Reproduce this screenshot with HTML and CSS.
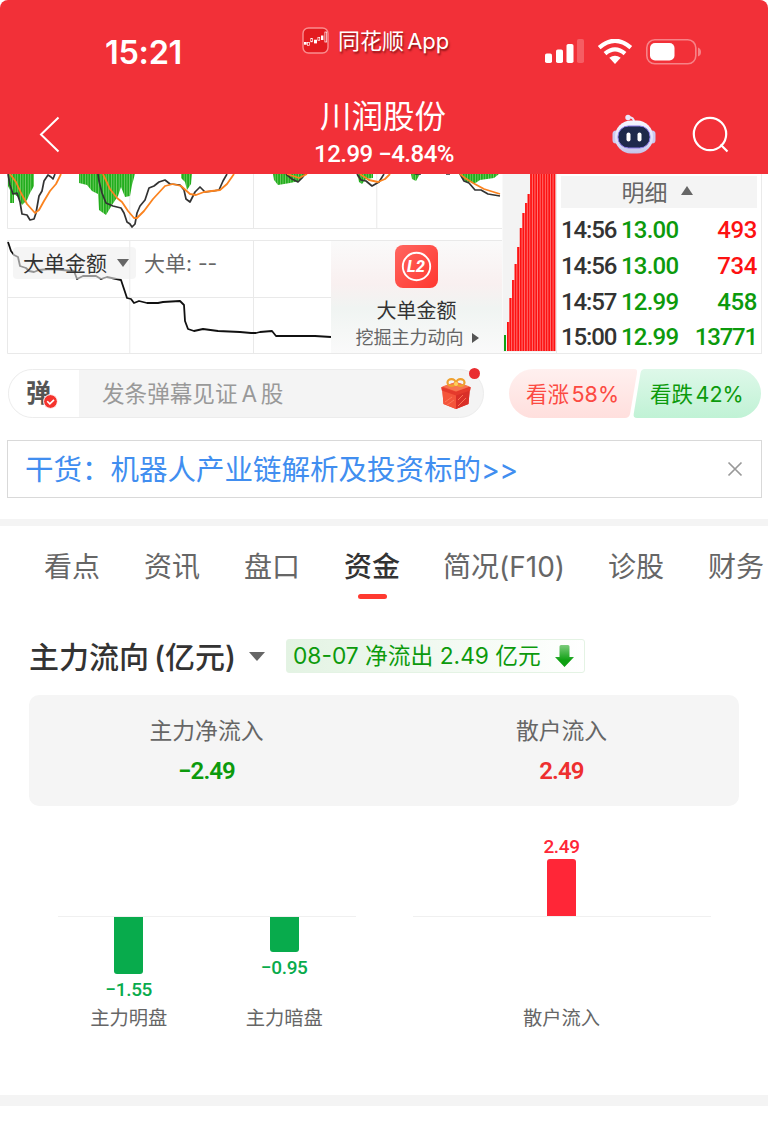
FILE: index.html
```html
<!DOCTYPE html>
<html lang="zh-CN">
<head>
<meta charset="utf-8">
<title>川润股份</title>
<link rel="stylesheet" href="styles.css">
</head>
<body>
<header class="header">
  <div class="status">
    <div class="clock">15:21</div>
    <div class="brand">
      <svg width="27" height="27" viewBox="0 0 27 27"><rect x="1" y="1" width="25" height="25" rx="5.500" fill="#e31b20" stroke="#fa8d8f" stroke-width="1.400"/><g fill="#fff"><rect x="2" y="15" width="2.700" height="2.700"/><rect x="12" y="12.700" width="3" height="3.700"/><rect x="19" y="8.500" width="2.400" height="4.500"/></g><g fill="none" stroke="#fff" stroke-width=".7"><rect x="5.600" y="15.500" width="1.800" height="2.800"/><rect x="8.800" y="11.500" width="1.800" height="3.300"/><rect x="15.900" y="10.500" width="1.800" height="2.800"/><rect x="22.900" y="5" width="1.800" height="10"/></g></svg>
      <span class="brand-name">同花顺 App</span>
    </div>
    <div class="signals">
      <svg width="39" height="25" viewBox="0 0 39 25" fill="#fff"><rect x="0" y="14.500" width="7" height="9.500" rx="1.800"/><rect x="11" y="10.500" width="7" height="13.500" rx="1.800"/><rect x="21.500" y="5" width="7" height="19" rx="1.800"/><rect x="32" y="0" width="7" height="24" rx="1.800" opacity=".22"/></svg>
      <svg width="36" height="26" viewBox="0 0 36 26" fill="none" stroke="#fff" stroke-width="4.200"><path d="M2.200 8.600Q18-5 33.800 8.600"/><path d="M8 14.700Q18 6 28 14.700"/><path d="M12.300 18.800Q18 14.500 23.700 18.800L18 25Z" fill="#fff" stroke="none"/></svg>
      <svg width="56" height="26" viewBox="0 0 56 26"><rect x=".800" y=".800" width="49" height="24" rx="8" fill="none" stroke="#fff" stroke-opacity=".4" stroke-width="1.600"/><rect x="4" y="4" width="24.500" height="17.500" rx="5" fill="#fff"/><path d="M52 8.500q3 1 3 4.500t-3 4.500z" fill="#fff" opacity=".4"/></svg>
    </div>
  </div>
  <nav class="nav">
    <svg class="back" width="21" height="37" viewBox="0 0 21 37" fill="none" stroke="#fff" stroke-width="2"><path d="M19.500 1.500L2 18.500L19.500 35.500"/></svg>
    <div class="stock">
      <h1 class="stock-name">川润股份</h1>
      <div class="stock-quote">12.99 −4.84%</div>
    </div>
    <div class="actions">
      <svg width="44" height="41" viewBox="0 0 44 41"><defs><linearGradient id="shell" x1="0" y1="0" x2="0" y2="1"><stop offset="0" stop-color="#f6f6ff"/><stop offset=".7" stop-color="#dcdcf5"/><stop offset="1" stop-color="#c3c2e8"/></linearGradient></defs><path d="M22 8c0-4-2-5-6-5" fill="none" stroke="#e9e8fb" stroke-width="2"/><circle cx="16" cy="3.500" r="2.700" fill="#e9e8fb"/><rect x=".5" y="16.500" width="7" height="13" rx="3.500" fill="#cbcaef"/><rect x="36.500" y="16.500" width="7" height="13" rx="3.500" fill="#cbcaef"/><rect x="3" y="6.500" width="38" height="33" rx="16" fill="url(#shell)"/><rect x="6" y="12" width="32" height="22" rx="10.500" fill="#1e294b" stroke="#8b7be8" stroke-width="1"/><rect x="14.500" y="18.500" width="4" height="9" rx="2" fill="#fff"/><rect x="25.500" y="18.500" width="4" height="9" rx="2" fill="#fff"/></svg>
      <svg width="37" height="37" viewBox="0 0 37 37" fill="none" stroke="#fff" stroke-width="2.200"><circle cx="18" cy="18" r="16.200"/><path d="M28.500 28.500L35.500 35.500"/></svg>
    </div>
  </nav>
</header>

<section class="market">
  <div class="charts">
    <svg width="502" height="180" viewBox="0 174 502 180">
      <defs>
        <pattern id="hist" width="2.600" height="10" patternUnits="userSpaceOnUse"><rect width="2.600" height="10" fill="#7bd06c"/><rect width="1.800" height="10" fill="#22ad1e"/></pattern>
      </defs>
      <g fill="none" stroke="#e9e9e9"><path d="M7.500 174V228.500H502M129.800 174V228M253.500 174V228M376.800 174V228M7.500 240.500H502M7.500 240V353.500H502M7.500 297.500H331M129.800 241V353M253.500 241V353"/></g>
      <g fill="url(#hist)">
        <path d="M8 174V186L10 190V203H14V194L18 197L22 205L27 200L30 193L34 186V174Z"/>
        <path d="M79 174V183L87 185L92 191L98 194L99 210L106 215L112 205L118 196L121 187L125 197L130 196L132 185L135 174Z"/>
        <path d="M181 174V178L185 182L187 190L191 184L192 174Z"/>
        <path d="M273 174L274 180L278 185L290 183L299 181L305 174Z"/>
        <path d="M357 174L359 182L362 184L366 179L373 178V174ZM411 174L412 179L416 181L420 174ZM459 174L466 182L472 182L474 184L480 180L494 178L499 174Z"/>
      </g>
      <g fill="none" stroke="#333" stroke-width="1.700" stroke-linejoin="round">
        <path d="M8 174L10 185L13 194L17 193L20 202L22 214L27 215L30 220L34 219L36 213L39 196L42 191L44 181L48 175L51 177L53 179L55 174"/>
        <path d="M98 174L99 181L102 193L106 203L113 206L121 208L124 213L127 222L130 224L132 227L135 224L137 213L140 206L145 200L149 188L154 186L159 182L165 180L170 184L180 185L184 190L186 199L190 202L195 192L200 187L205 192L213 191L219 190L223 181L227 174"/>
        <path d="M286 174L292 179L298 182L302 178L305 174M357 174L361 180L366 181L372 186L379 182L384 174M415 174H421M446 174H450M460 174L464 181L469 183L475 190L481 190L488 194L500 196"/>
      </g>
      <g fill="none" stroke="#fb831f" stroke-width="1.800" stroke-linejoin="round">
        <path d="M10 174L16 182L21 193L27 204L35 213L39 210L44 201L50 191L56 184L61 174"/>
        <path d="M103 174L110 189L117 198L122 202L128 211L134 218L137 218L144 211L153 199L165 186L173 184L181 186L190 194L196 195L204 192L220 190L227 184L234 174"/>
        <path d="M287 174L299 178L307 174M360 174L369 180L378 182L385 179L390 174M460 174L465 178L473 183L484 189L500 194"/>
      </g>
      <path d="M8 242L11 251L14 255L18 257L20 266L26 268L29 271L34 272L39 270L50 269L62 270L74 271L77 279L83 276L96 276L101 279L107 277L121 280L124 289L127 298L131 299L134 303L139 301L147 303L158 303L163 302L180 301L184 305L185 321L188 329L194 331L203 329L218 331L240 332L251 333L256 333L260 332L272 331L276 336L286 336L296 336L315 336L331 337" fill="none" stroke="#111" stroke-width="1.800" stroke-linejoin="round"/>
    </svg>
    <div class="legend">
      <span class="chip">大单金额 <i class="tri-down"></i></span>
      <span class="legend-value">大单: --</span>
    </div>
    <div class="promo">
      <svg width="43" height="43" viewBox="0 0 43 43"><defs><linearGradient id="l2" x1="0" y1="0" x2="1" y2="1"><stop offset="0" stop-color="#ff6660"/><stop offset="1" stop-color="#ff372f"/></linearGradient></defs><rect width="43" height="43" rx="8" fill="url(#l2)"/><circle cx="21.500" cy="21.500" r="13.700" fill="none" stroke="#fff" stroke-width="1.900"/><text class="l2-text" x="21" y="27.300" text-anchor="middle">L2</text></svg>
      <div class="promo-title">大单金额</div>
      <div class="promo-sub">挖掘主力动向 <i class="tri-right"></i></div>
    </div>
  </div>
  <svg class="volume" width="54" height="180" viewBox="502 174 54 180">
    <rect x="502.500" y="174" width="53" height="178" fill="#f3f3f3"/>
    <path d="M502 353.500H556" stroke="#e9e9e9"/>
    <path d="M504 335h2V351h-2z" fill="#12a112"/>
    <path d="M507 322H509.500V298H512V280H514.500V264H517V247H519.700V228H522.300V213H525V203H527.500V194H530V174H555.500V351H507Z" fill="#ff7c7c"/>
    <path d="M507 322h1.700V351h-1.700zM509.500 298h1.700V351h-1.700zM512.100 280h1.700V351h-1.700zM514.700 264h1.700V351h-1.700zM517.300 247h1.700V351h-1.700zM519.900 228h1.700V351h-1.700zM522.500 213h1.700V351h-1.700zM525.100 203h1.700V351h-1.700zM527.700 194h1.700V351h-1.700zM530.200 174h1.700V351h-1.700zM532.800 174h1.700V351h-1.700zM535.400 174h1.700V351h-1.700zM538 174h1.700V351h-1.700zM540.600 174h1.700V351h-1.700zM543.200 174h1.700V351h-1.700zM545.700 174h1.700V351h-1.700zM548.300 174h1.700V351h-1.700zM550.900 174h1.700V351h-1.700zM553.500 174h1.700V351h-1.700z" fill="#fd1111"/>
  </svg>
  <div class="ticks">
    <div class="ticks-head">明细 <i class="tri-up"></i></div>
    <div class="tick"><span class="tick-time">14:56</span><span class="tick-price">13.00</span><span class="tick-vol up">493</span></div>
    <div class="tick"><span class="tick-time">14:56</span><span class="tick-price">13.00</span><span class="tick-vol up">734</span></div>
    <div class="tick"><span class="tick-time">14:57</span><span class="tick-price">12.99</span><span class="tick-vol">458</span></div>
    <div class="tick"><span class="tick-time">15:00</span><span class="tick-price">12.99</span><span class="tick-vol tick-vol-long">13771</span></div>
  </div>
</section>

<section class="social">
  <div class="comment">
    <div class="comment-toggle"><span class="dan">弹</span><svg class="check" width="15" height="15" viewBox="0 0 15 15"><circle cx="7.500" cy="7.500" r="6.900" fill="#f5332c" stroke="#fff"/><path d="M4.200 7.200l2.600 2.600 4.200-4" fill="none" stroke="#fff" stroke-width="1.600"/></svg></div>
    <div class="comment-input">发条弹幕见证 A 股</div>
    <svg class="gift" width="30" height="32" viewBox="0 0 30 32"><path d="M1 9L15 4L29 9L27.500 26L15 31L2.500 26Z" fill="#ed4532"/><path d="M1 9L15 14.500V31L2.500 26Z" fill="#f4553b"/><path d="M15 14.500L29 9L27.500 26L15 31Z" fill="#d92f28"/><path d="M1 8.500L15 4L29 8.500L15 13.500Z" fill="#f77450"/><path d="M0 9L15 14V17.500L.8 12.500ZM30 9L15 14V17.500L29.200 12.500Z" fill="#e53a2c"/><path d="M4 24l7-5M6 27l7-5M17 28l8-8M17 22l5-5" stroke="#ff7a5a" stroke-width=".9"/><g fill="none" stroke="#efa12f" stroke-width="2.200"><ellipse cx="10.500" cy="4.500" rx="4" ry="3.300"/><ellipse cx="19.500" cy="4.500" rx="4" ry="3.300"/></g><circle cx="15" cy="6" r="2" fill="#ffd05b"/></svg>
    <i class="dot"></i>
  </div>
  <div class="votes">
    <div class="vote vote-up"><svg class="vote-shape" width="128" height="49" viewBox="0 0 128 49"><defs><linearGradient id="vu" x1="0" y1="0" x2="0" y2="1"><stop offset="0" stop-color="#fff0ef"/><stop offset="1" stop-color="#ffdfdd"/></linearGradient></defs><path d="M24.500 0H125Q129 0 128 4L121 45Q120 49 116 49H24.500A24.500 24.500 0 0 1 24.500 0Z" fill="url(#vu)"/></svg><span class="vote-text">看涨 58%</span></div>
    <div class="vote vote-down"><svg class="vote-shape" width="128" height="49" viewBox="0 0 128 49"><defs><linearGradient id="vd" x1="0" y1="0" x2="0" y2="1"><stop offset="0" stop-color="#def8e9"/><stop offset="1" stop-color="#c0f2d5"/></linearGradient></defs><path d="M12 0H103.500A24.500 24.500 0 0 1 103.500 49H4Q0 49 .7 45L7.500 4Q8.200 0 12 0Z" fill="url(#vd)"/></svg><span class="vote-text">看跌 42%</span></div>
  </div>
</section>

<section class="banner">
  <span class="banner-text">干货：机器人产业链解析及投资标的<span class="banner-more">&gt;&gt;</span></span>
  <svg width="16" height="16" viewBox="0 0 16 16" stroke="#999" stroke-width="1.700"><path d="M1.500 1.500L14.500 14.500M14.500 1.500L1.500 14.500"/></svg>
</section>

<nav class="tabs">
  <span class="tab">看点</span><span class="tab">资讯</span><span class="tab">盘口</span><span class="tab tab-active">资金</span><span class="tab tab-wide">简况(F10)</span><span class="tab">诊股</span><span class="tab">财务</span>
</nav>

<main class="flow">
  <div class="flow-head">
    <h2 class="flow-title">主力流向 (亿元)</h2>
    <i class="tri-down"></i>
    <div class="flow-badge"><span class="badge-text">08-07 净流出 2.49 亿元</span><svg width="19" height="22" viewBox="0 0 19 22"><defs><linearGradient id="ar" x1="0" y1="0" x2="0" y2="1"><stop offset="0" stop-color="#7dcc7d"/><stop offset=".7" stop-color="#0ea012"/></linearGradient></defs><path d="M4.500 1.500Q4.500 0 6 0H13Q14.500 0 14.500 1.500V12H19L9.500 22L0 12H4.500Z" fill="url(#ar)"/></svg></div>
  </div>
  <div class="summary">
    <div class="cell"><div class="cell-label">主力净流入</div><div class="cell-value down">−2.49</div></div>
    <div class="cell"><div class="cell-label">散户流入</div><div class="cell-value rise">2.49</div></div>
  </div>
  <div class="plots">
    <div class="plot">
      <div class="axis"></div>
      <div class="neg"><i class="bar" style="height:57px"></i><b class="bar-value">−1.55</b></div>
      <div class="neg"><i class="bar" style="height:35px"></i><b class="bar-value">−0.95</b></div>
      <div class="bar-label">主力明盘</div>
      <div class="bar-label">主力暗盘</div>
    </div>
    <div class="plot plot-single">
      <div class="pos"><b class="bar-value">2.49</b><i class="bar" style="height:57px"></i></div>
      <div class="axis"></div>
      <div class="bar-label">散户流入</div>
    </div>
  </div>
</main>
</body>
</html>
```

FILE: styles.css
```css
* { box-sizing: border-box; }

body {
  margin: 0;
  width: 768px;
  height: 1125px;
  overflow: hidden;
  background: #fff;
  color: #333;
  font-family: Inter, "Noto Sans CJK SC", sans-serif;
  white-space: nowrap;
}

svg { display: block; flex: none; }

h1, h2 { margin: 0; font-weight: 400; }

/* header */
.header {
  height: 174px;
  background: #f23038;
  border-radius: 8px 8px 0 0;
  color: #fff;
}

.status {
  display: grid;
  grid-template-columns: 302px 1fr 223px;
  height: 99px;
}

.clock {
  padding: 33px 0 0 105px;
  font-size: 32.500px;
  line-height: 40px;
  font-weight: 600;
  letter-spacing: -0.3px;
}

.brand { display: flex; gap: 9px; height: 54px; padding-top: 27px; }

.brand-name {
  font-size: 22px;
  line-height: 28px;
  word-spacing: -3px;
  text-shadow: 1px 2px 2px rgba(70, 0, 0, .6);
}

.signals { display: flex; align-items: flex-start; padding-top: 39px; gap: 13px; }

.nav {
  display: grid;
  grid-template-columns: 284px 200px 1fr;
  height: 75px;
}

.back { margin: 17px 0 0 39px; }
.stock { text-align: center; }
.stock-name { font-size: 31.500px; line-height: 36px; margin-right: 2px; }

.stock-quote {
  font: 500 24px/28px Roboto, sans-serif;
  margin-top: 5px;
  letter-spacing: -0.500px;
}

.actions { display: flex; gap: 36px; padding: 15px 0 0 128px; }
.actions svg:last-child { margin-top: 2px; }

/* market */
.market { display: flex; height: 180px; }
.charts { position: relative; width: 502px; }

.legend {
  position: absolute;
  left: 13px;
  top: 73px;
  display: flex;
  gap: 8px;
  font-size: 21px;
  line-height: 33px;
  color: #666;
}

.chip {
  display: flex;
  align-items: center;
  gap: 10px;
  width: 123px;
  height: 32px;
  padding-left: 10px;
  border-radius: 4px;
  background: rgba(238, 238, 238, .6);
  color: #333;
}

.tri-down {
  width: 0;
  border: 6px solid transparent;
  border-top: 8px solid #666;
  border-bottom: 0;
}

.promo {
  position: absolute;
  left: 331px;
  top: 67px;
  width: 171px;
  height: 112px;
  padding-top: 4px;
  display: flex;
  flex-direction: column;
  align-items: center;
  background: linear-gradient(#fafafa 0, #f9f0f0 38%, #f0f4f2 60%, #fafafa 100%);
}

.l2-text { font: italic 800 16.500px Roboto, sans-serif; fill: #fff; }
.promo-title { font-size: 20px; line-height: 28px; margin-top: 9px; }

.promo-sub {
  display: flex;
  align-items: center;
  gap: 8px;
  padding-left: 1px;
  font-size: 18px;
  line-height: 26px;
  color: #666;
}

.tri-right {
  border: 5px solid transparent;
  border-left: 7px solid #555;
  border-right: 0;
}

.ticks {
  width: 206px;
  padding: 2px 4px 0;
  border: solid #eaeaea;
  border-width: 0 1px 1px;
}

.ticks-head {
  display: flex;
  align-items: center;
  justify-content: center;
  gap: 13px;
  height: 32px;
  margin-bottom: 4px;
  padding: 0 4px 3px 0;
  background: #f4f4f4;
  color: #666;
  font-size: 23px;
}

.tri-up {
  border: 6px solid transparent;
  border-bottom: 9px solid #666;
  border-top: 0;
}

.tick {
  display: grid;
  grid-template-columns: 60px 60px 1fr;
  height: 35.800px;
  font: 500 24px/36px Roboto, sans-serif;
  color: #0c9a0c;
}

.tick-time { color: #333; letter-spacing: -1.100px; }
.tick-price { letter-spacing: -.8px; }
.tick-vol { text-align: right; letter-spacing: -.4px; }
.tick-vol-long { letter-spacing: -1.200px; }
.up { color: #fd1111; }

/* comments and votes */
.social {
  display: flex;
  gap: 25px;
  height: 64px;
  padding: 15px 0 0 8px;
}

.comment {
  position: relative;
  display: flex;
  width: 476px;
  height: 49px;
  border: 1.500px solid #ececec;
  border-radius: 25px;
  background: #f4f4f4;
}

.comment-toggle {
  position: relative;
  width: 70px;
  border-radius: 24px 0 0 24px;
  background: #fff;
}

.dan {
  display: block;
  padding-left: 17px;
  font-size: 25px;
  line-height: 46px;
  font-weight: 700;
  color: #555;
}

.check { position: absolute; left: 34px; top: 24px; }

.comment-input {
  width: 338px;
  padding-left: 23px;
  font-size: 22.600px;
  line-height: 48px;
  word-spacing: -2.500px;
  color: #999;
}

.gift { margin: 8px 0 0 24px; }

.dot {
  position: absolute;
  right: 3px;
  top: -2px;
  width: 11px;
  height: 11px;
  border-radius: 50%;
  background: #e92d30;
}

.votes { display: flex; }
.vote { position: relative; width: 124px; height: 49px; }
.vote-text {
  position: relative;
  display: block;
  padding-left: 17px;
  font-size: 21.500px;
  line-height: 50px;
  word-spacing: -3.500px;
}
.vote-shape { position: absolute; left: 0; top: 0; }
.vote-up { color: #fc4a42; }
.vote-down { color: #0c9a0c; }

/* banner */
.banner {
  display: flex;
  align-items: center;
  justify-content: space-between;
  height: 58px;
  margin: 22px 6px 21px 7px;
  padding: 0 18px 0 17px;
  border: 1px solid #d9d9d9;
}

.banner-text { font-size: 28.500px; padding-bottom: 3px; color: #418ef0; }
.banner-more { letter-spacing: -.7px; }

/* tabs */
.tabs {
  display: flex;
  gap: 44px;
  height: 86px;
  padding: 21px 0 0 44px;
  border-top: 7px solid #f4f4f4;
  overflow: hidden;
}

.tab {
  display: flex;
  flex-direction: column;
  align-items: center;
  flex: none;
  width: 56px;
  font-size: 28px;
  line-height: 40px;
  color: #666;
}

.tab-wide { width: 120px; }
.tab-active { color: #333; font-weight: 500; }

.tab-active::after {
  content: "";
  width: 29px;
  height: 5px;
  margin-top: 7px;
  border-radius: 3px;
  background: #ff3a30;
}

/* capital flow */
.flow {
  height: 501px;
  padding: 34px 29px 0;
  border-bottom: 11px solid #f4f4f4;
}

.flow-head { display: flex; align-items: center; height: 34px; }
.flow-title { width: 220px; padding-bottom: 3px; font-size: 30px; font-weight: 500; word-spacing: -3px; }
.flow-head .tri-down { border-width: 9px 8px 0; }

.flow-badge {
  display: flex;
  align-items: center;
  gap: 13px;
  width: 299px;
  height: 34px;
  margin-left: 21px;
  padding-left: 6px;
  border: 1px solid #e4f3e4;
  border-radius: 3px;
  background: linear-gradient(90deg, #e3f3e3, #fff);
}

.badge-text { width: 249px; padding-bottom: 3px; font-size: 22.750px; color: #0c9a0c; }

.summary {
  display: grid;
  grid-template-columns: 1fr 1fr;
  height: 111px;
  margin-top: 22px;
  padding-top: 20px;
  border-radius: 10px;
  background: #f5f5f5;
  text-align: center;
}

.cell-label { font-size: 22.800px; line-height: 32px; color: #666; }
.cell-value { font: 600 24px/32px Roboto, sans-serif; margin-top: 8px; letter-spacing: -.9px; }
.down { color: #0c9a0c; }
.rise { color: #ee2f2f; }

.plots { display: grid; grid-template-columns: 355px 355px; }

.plot {
  display: grid;
  grid-template-columns: 155.500px 155.500px;
  grid-template-rows: 110px 1px 88px 28px;
  justify-content: center;
}

.plot-single { grid-template-columns: 311px; }
.axis { grid-row: 2; grid-column: 1 / -1; margin: 0 6.500px; background: #f0f0f0; }

.pos, .neg { display: flex; flex-direction: column; align-items: center; }
.pos { grid-row: 1; justify-content: flex-end; gap: 0; color: #ff2637; }
.neg { grid-row: 3; gap: 4px; color: #08ab4c; }
.bar { width: 29px; background: currentColor; }
.pos .bar { border-radius: 3px 3px 0 0; }
.neg .bar { border-radius: 0 0 3px 3px; }
.bar-value { font: 500 19px/24px Roboto, sans-serif; letter-spacing: -.4px; }

.bar-label {
  grid-row: 4;
  text-align: center;
  font-size: 19.300px;
  line-height: 27px;
  color: #666;
}
```
